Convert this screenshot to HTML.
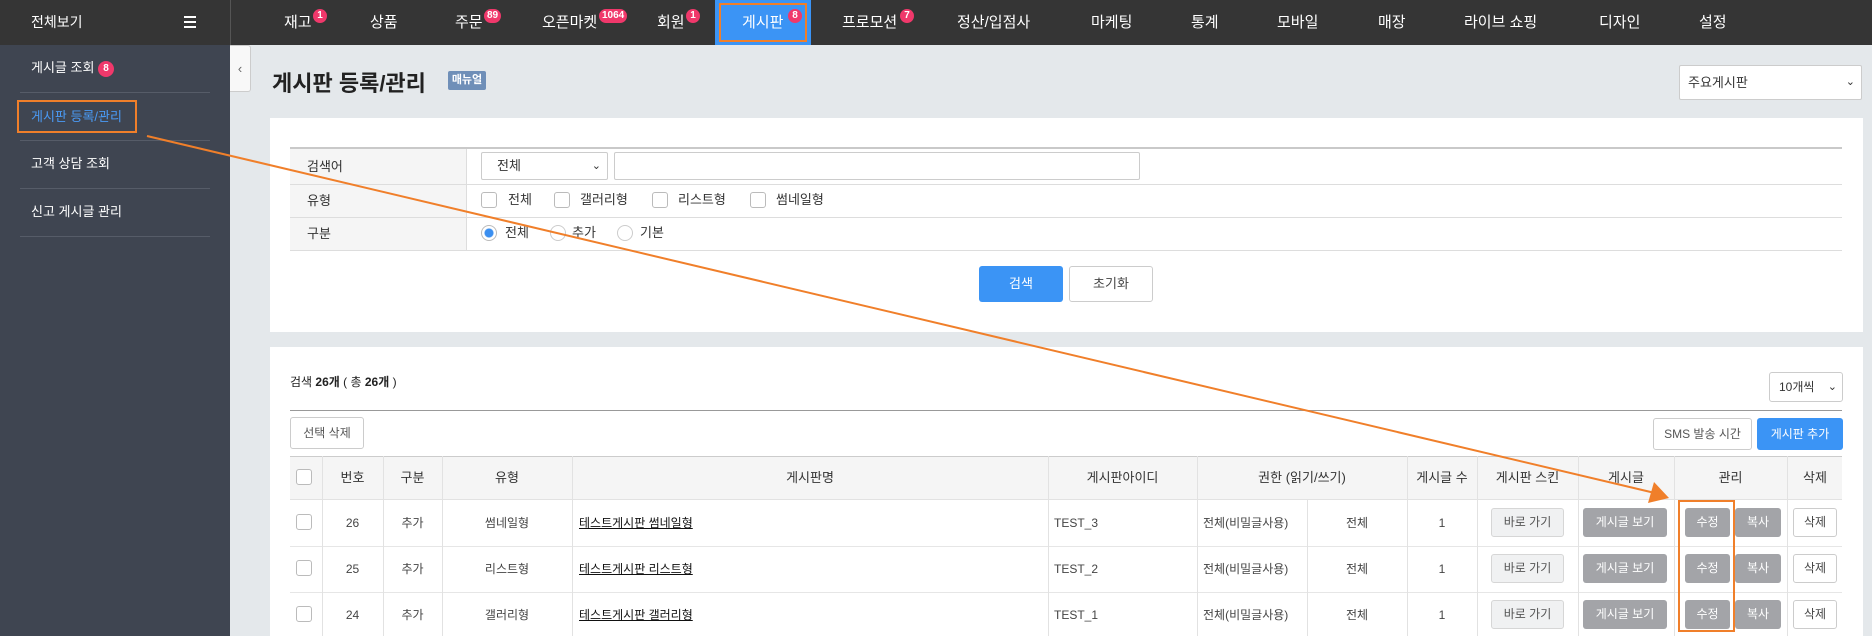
<!DOCTYPE html>
<html><head><meta charset="utf-8"><style>
*{box-sizing:border-box;margin:0;padding:0}
html,body{width:1872px;height:636px;overflow:hidden}
body{position:relative;background:#e4e8eb;font-family:"Liberation Sans","Noto Sans CJK KR",sans-serif;font-size:13px;color:#333}
.a{position:absolute}
.top{left:0;top:0;width:1872px;height:45px;background:#353535}
.nav{top:0;height:45px;line-height:45px;color:#fff;font-size:15px;white-space:nowrap}
.bd{display:inline-block;background:#f0386b;color:#fff;font-size:10px;font-weight:bold;line-height:14px;height:14px;min-width:14px;padding:0 3px;border-radius:7px;text-align:center;position:absolute;top:9px}
.side{left:0;top:45px;width:230px;height:591px;background:#3f4551}
.si{left:31px;color:#fff;font-size:13px;line-height:16px;white-space:nowrap}
.sep{left:20px;width:190px;height:1px;background:#565c68}
.panel{background:#fff}
.lbl{background:#f5f5f5;left:290px;width:176px;padding-left:17px}
.hl{height:1px;background:#ddd}
.cb{width:16px;height:16px;border:1px solid #bbb;border-radius:3px;background:#fff}
.lb{line-height:16px;white-space:nowrap}
.btn{border-radius:3px;text-align:center;font-size:12px;white-space:nowrap}
.g{background:#a3a4a8;color:#fff}
.w{background:#fff;border:1px solid #ccc;color:#444}
.th{top:456px;height:44px;line-height:44px;text-align:center;font-size:13px;color:#333;white-space:nowrap}
.td{height:46px;line-height:46px;text-align:center;font-size:12px;color:#444;white-space:nowrap}
.vl{width:1px;background:#e2e2e2}
</style></head><body>
<div class="a top"></div>
<div class="a nav" style="left:31px;font-size:14px">전체보기</div>
<div class="a" style="left:184px;top:16px;width:12px;height:2px;background:#fff;box-shadow:0 5px 0 #fff,0 10px 0 #fff"></div>
<div class="a" style="left:230px;top:0;width:1px;height:45px;background:#555"></div>
<div class="a" style="left:715px;top:0;width:96px;height:45px;background:#3b94f5"></div>
<div class="a" style="left:719px;top:3px;width:88px;height:39px;border:2px solid #f07f2a"></div>
<div class="a nav" style="left:284px">재고<span class="bd" style="left:29px">1</span></div>
<div class="a nav" style="left:370px">상품</div>
<div class="a nav" style="left:455px">주문<span class="bd" style="left:29px">89</span></div>
<div class="a nav" style="left:542px">오픈마켓<span class="bd" style="left:57px">1064</span></div>
<div class="a nav" style="left:657px">회원<span class="bd" style="left:29px">1</span></div>
<div class="a nav" style="left:742px">게시판<span class="bd" style="left:46px">8</span></div>
<div class="a nav" style="left:842px">프로모션<span class="bd" style="left:58px">7</span></div>
<div class="a nav" style="left:957px">정산/입점사</div>
<div class="a nav" style="left:1091px">마케팅</div>
<div class="a nav" style="left:1191px">통계</div>
<div class="a nav" style="left:1277px">모바일</div>
<div class="a nav" style="left:1378px">매장</div>
<div class="a nav" style="left:1464px">라이브 쇼핑</div>
<div class="a nav" style="left:1599px">디자인</div>
<div class="a nav" style="left:1699px">설정</div>

<div class="a side"></div>
<div class="a si" style="top:60px">게시글 조회 <span style="display:inline-block;width:16px;height:16px;border-radius:8px;background:#f0386b;font-size:10px;font-weight:bold;text-align:center;line-height:16px;vertical-align:1px">8</span></div>
<div class="a sep" style="top:92px"></div>
<div class="a si" style="top:109px;color:#4a9af5">게시판 등록/관리</div>
<div class="a" style="left:17px;top:100px;width:120px;height:33px;border:2px solid #f07f2a"></div>
<div class="a sep" style="top:140px"></div>
<div class="a si" style="top:156px">고객 상담 조회</div>
<div class="a sep" style="top:188px"></div>
<div class="a si" style="top:204px">신고 게시글 관리</div>
<div class="a sep" style="top:236px"></div>
<div class="a" style="left:230px;top:45px;width:21px;height:47px;background:#f8f8f8;border:1px solid #ccc;border-left:none;border-radius:0 3px 3px 0;color:#666;text-align:center;line-height:45px;font-size:13px">‹</div>

<div class="a" style="left:272px;top:66px;font-size:22px;font-weight:bold;color:#222;white-space:nowrap">게시판 등록/관리</div>
<div class="a" style="left:448px;top:71px;width:38px;height:19px;background:#6f8fb8;color:#fff;font-size:11px;font-weight:bold;text-align:center;line-height:19px;border-radius:2px">매뉴얼</div>
<div class="a" style="left:1679px;top:65px;width:183px;height:35px;background:#fff;border:1px solid #ccc;border-radius:2px;padding-left:8px;line-height:33px;font-size:13px">주요게시판<span style="position:absolute;right:6px;font-size:11px">⌄</span></div>

<div class="a panel" style="left:270px;top:118px;width:1593px;height:214px"></div>
<div class="a" style="left:290px;top:147px;width:1552px;height:2px;background:#c9c9c9"></div>
<div class="a lbl" style="top:149px;height:35px;line-height:35px">검색어</div>
<div class="a lbl" style="top:185px;height:32px;line-height:32px">유형</div>
<div class="a lbl" style="top:218px;height:32px;line-height:32px">구분</div>
<div class="a hl" style="left:290px;top:184px;width:1552px"></div>
<div class="a hl" style="left:290px;top:217px;width:1552px"></div>
<div class="a hl" style="left:290px;top:250px;width:1552px"></div>
<div class="a" style="left:466px;top:149px;width:1px;height:101px;background:#ddd"></div>
<div class="a" style="left:481px;top:152px;width:127px;height:28px;border:1px solid #ccc;border-radius:2px;padding-left:15px;line-height:26px">전체<span style="position:absolute;right:6px;font-size:11px">⌄</span></div>
<div class="a" style="left:614px;top:152px;width:526px;height:28px;border:1px solid #ccc;border-radius:2px"></div>
<div class="a cb" style="left:481px;top:192px"></div><div class="a lb" style="left:508px;top:192px">전체</div>
<div class="a cb" style="left:554px;top:192px"></div><div class="a lb" style="left:580px;top:192px">갤러리형</div>
<div class="a cb" style="left:652px;top:192px"></div><div class="a lb" style="left:678px;top:192px">리스트형</div>
<div class="a cb" style="left:750px;top:192px"></div><div class="a lb" style="left:776px;top:192px">썸네일형</div>
<div class="a" style="left:481px;top:225px;width:16px;height:16px;border:1px solid #bbb;border-radius:8px;background:radial-gradient(circle,#3b8ff0 4px,#fff 5px)"></div><div class="a lb" style="left:505px;top:225px">전체</div>
<div class="a" style="left:550px;top:225px;width:16px;height:16px;border:1px solid #ccc;border-radius:8px"></div><div class="a lb" style="left:572px;top:225px">추가</div>
<div class="a" style="left:617px;top:225px;width:16px;height:16px;border:1px solid #ccc;border-radius:8px"></div><div class="a lb" style="left:640px;top:225px">기본</div>
<div class="a btn" style="left:979px;top:266px;width:84px;height:36px;line-height:36px;background:#3b94f5;color:#fff;font-size:13px">검색</div>
<div class="a btn w" style="left:1069px;top:266px;width:84px;height:36px;line-height:34px;font-size:13px">초기화</div>

<div class="a panel" style="left:270px;top:347px;width:1593px;height:289px"></div>
<div class="a" style="left:290px;top:373px;font-size:12px;color:#222;white-space:nowrap">검색 <b>26개</b> ( 총 <b>26개</b> )</div>
<div class="a" style="left:1769px;top:372px;width:74px;height:30px;border:1px solid #ccc;border-radius:3px;padding-left:9px;line-height:28px;font-size:12px">10개씩<span style="position:absolute;right:5px;font-size:11px">⌄</span></div>
<div class="a" style="left:290px;top:410px;width:1552px;height:1px;background:#999"></div>
<div class="a btn w" style="left:290px;top:417px;width:74px;height:32px;line-height:30px;color:#555">선택 삭제</div>
<div class="a btn w" style="left:1653px;top:418px;width:99px;height:32px;line-height:30px;color:#555">SMS 발송 시간</div>
<div class="a btn" style="left:1757px;top:418px;width:86px;height:32px;line-height:32px;background:#3b94f5;color:#fff">게시판 추가</div>

<div class="a" style="left:290px;top:456px;width:1552px;height:44px;background:#f5f5f5;border-top:1px solid #ccc;border-bottom:1px solid #e2e2e2"></div>
<div class="a hl" style="left:290px;top:546px;width:1552px;background:#e6e6e6"></div>
<div class="a hl" style="left:290px;top:592px;width:1552px;background:#e6e6e6"></div>
<div class="a vl" style="left:322px;top:456px;height:180px"></div>
<div class="a vl" style="left:383px;top:456px;height:180px"></div>
<div class="a vl" style="left:442px;top:456px;height:180px"></div>
<div class="a vl" style="left:572px;top:456px;height:180px"></div>
<div class="a vl" style="left:1048px;top:456px;height:180px"></div>
<div class="a vl" style="left:1197px;top:456px;height:180px"></div>
<div class="a vl" style="left:1307px;top:500px;height:136px"></div>
<div class="a vl" style="left:1407px;top:456px;height:180px"></div>
<div class="a vl" style="left:1477px;top:456px;height:180px"></div>
<div class="a vl" style="left:1578px;top:456px;height:180px"></div>
<div class="a vl" style="left:1674px;top:456px;height:180px"></div>
<div class="a vl" style="left:1787px;top:456px;height:180px"></div>
<div class="a cb" style="left:296px;top:469px"></div>
<div class="a th" style="left:322px;width:61px">번호</div>
<div class="a th" style="left:383px;width:59px">구분</div>
<div class="a th" style="left:442px;width:130px">유형</div>
<div class="a th" style="left:572px;width:476px">게시판명</div>
<div class="a th" style="left:1048px;width:149px">게시판아이디</div>
<div class="a th" style="left:1197px;width:210px">권한 (읽기/쓰기)</div>
<div class="a th" style="left:1407px;width:70px">게시글 수</div>
<div class="a th" style="left:1477px;width:101px">게시판 스킨</div>
<div class="a th" style="left:1578px;width:96px">게시글</div>
<div class="a th" style="left:1674px;width:113px">관리</div>
<div class="a th" style="left:1787px;width:56px">삭제</div>

<div class="a" style="left:0;top:500px;width:1872px;height:46px">
 <div class="a cb" style="left:296px;top:14px"></div>
 <div class="a td" style="left:322px;width:61px">26</div><div class="a td" style="left:383px;width:59px">추가</div><div class="a td" style="left:442px;width:130px">썸네일형</div>
 <div class="a td" style="left:579px;color:#111;text-decoration:underline">테스트게시판 썸네일형</div>
 <div class="a td" style="left:1054px">TEST_3</div><div class="a td" style="left:1203px">전체(비밀글사용)</div><div class="a td" style="left:1307px;width:100px">전체</div>
 <div class="a td" style="left:1407px;width:70px">1</div>
</div>
<div class="a" style="left:0;top:546px;width:1872px;height:46px">
 <div class="a cb" style="left:296px;top:14px"></div>
 <div class="a td" style="left:322px;width:61px">25</div><div class="a td" style="left:383px;width:59px">추가</div><div class="a td" style="left:442px;width:130px">리스트형</div>
 <div class="a td" style="left:579px;color:#111;text-decoration:underline">테스트게시판 리스트형</div>
 <div class="a td" style="left:1054px">TEST_2</div><div class="a td" style="left:1203px">전체(비밀글사용)</div><div class="a td" style="left:1307px;width:100px">전체</div>
 <div class="a td" style="left:1407px;width:70px">1</div>
</div>
<div class="a" style="left:0;top:592px;width:1872px;height:44px">
 <div class="a cb" style="left:296px;top:14px"></div>
 <div class="a td" style="left:322px;width:61px">24</div><div class="a td" style="left:383px;width:59px">추가</div><div class="a td" style="left:442px;width:130px">갤러리형</div>
 <div class="a td" style="left:579px;color:#111;text-decoration:underline">테스트게시판 갤러리형</div>
 <div class="a td" style="left:1054px">TEST_1</div><div class="a td" style="left:1203px">전체(비밀글사용)</div><div class="a td" style="left:1307px;width:100px">전체</div>
 <div class="a td" style="left:1407px;width:70px">1</div>
</div>
<div class="a btn" style="left:1491px;top:508px;width:73px;height:29px;line-height:27px;background:#f0f1f2;border:1px solid #d6d6d6;color:#555">바로 가기</div>
<div class="a btn g" style="left:1583px;top:508px;width:84px;height:29px;line-height:29px">게시글 보기</div>
<div class="a btn g" style="left:1685px;top:508px;width:45px;height:29px;line-height:29px">수정</div>
<div class="a btn g" style="left:1735px;top:508px;width:46px;height:29px;line-height:29px">복사</div>
<div class="a btn w" style="left:1793px;top:508px;width:44px;height:29px;line-height:27px">삭제</div>
<div class="a btn" style="left:1491px;top:554px;width:73px;height:29px;line-height:27px;background:#f0f1f2;border:1px solid #d6d6d6;color:#555">바로 가기</div>
<div class="a btn g" style="left:1583px;top:554px;width:84px;height:29px;line-height:29px">게시글 보기</div>
<div class="a btn g" style="left:1685px;top:554px;width:45px;height:29px;line-height:29px">수정</div>
<div class="a btn g" style="left:1735px;top:554px;width:46px;height:29px;line-height:29px">복사</div>
<div class="a btn w" style="left:1793px;top:554px;width:44px;height:29px;line-height:27px">삭제</div>
<div class="a btn" style="left:1491px;top:600px;width:73px;height:29px;line-height:27px;background:#f0f1f2;border:1px solid #d6d6d6;color:#555">바로 가기</div>
<div class="a btn g" style="left:1583px;top:600px;width:84px;height:29px;line-height:29px">게시글 보기</div>
<div class="a btn g" style="left:1685px;top:600px;width:45px;height:29px;line-height:29px">수정</div>
<div class="a btn g" style="left:1735px;top:600px;width:46px;height:29px;line-height:29px">복사</div>
<div class="a btn w" style="left:1793px;top:600px;width:44px;height:29px;line-height:27px">삭제</div>

<div class="a" style="left:1678px;top:500px;width:57px;height:132px;border:2px solid #f07f2a"></div>
<svg class="a" style="left:0;top:0" width="1872" height="636">
<line x1="147" y1="136" x2="1655" y2="493" stroke="#f07f2a" stroke-width="2"/>
<polygon points="1669,498 1648,503 1654,482" fill="#f07f2a"/>
</svg>
</body></html>
